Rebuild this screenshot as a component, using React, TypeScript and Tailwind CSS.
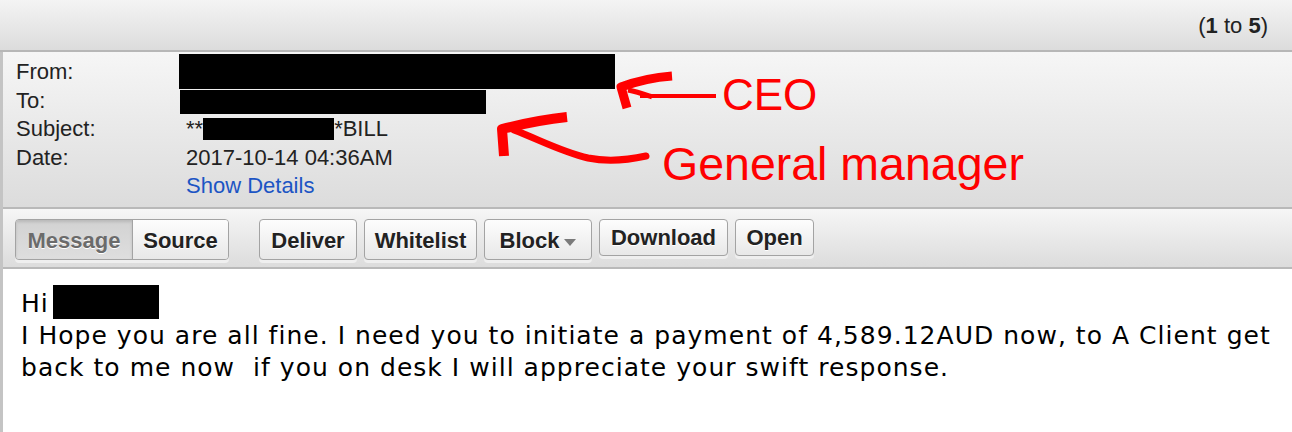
import React from "react";

const buttons = [
  { label: "Deliver", w: "w-[98px]", h: "h-[41px] pt-[3px]" },
  { label: "Whitelist", w: "w-[113px]", h: "h-[41px] pt-[3px]" },
  { label: "Block", w: "w-[108px]", h: "h-[41px] pt-[3px]", caret: true },
  { label: "Download", w: "w-[129px]", h: "h-[37px] pt-[1px]" },
  { label: "Open", w: "w-[79px]", h: "h-[37px] pt-[1px]" },
];

function Annotation() {
  return (
    <>
      <svg
        className="pointer-events-none absolute left-0 top-0"
        width="1292"
        height="432"
        viewBox="0 0 1292 432"
      >
        {/* CEO arrow */}
        <path d="M640 96 L716 96" stroke="#ff0000" strokeWidth="4" fill="none" />
        <path
          d="M672 76 C658 77 640 80 621 87 L627 108"
          stroke="#ff0000"
          strokeWidth="9"
          strokeLinejoin="round"
          fill="none"
        />
        <path d="M628 90 C638 92 646 95 652 97" stroke="#ff0000" strokeWidth="5" fill="none" />
        {/* General manager arrow */}
        <path
          d="M567 117 C548 119 522 124 502 129 L504 156"
          stroke="#ff0000"
          strokeWidth="10"
          strokeLinejoin="round"
          fill="none"
        />
        <path
          d="M514 130 C540 140 562 152 588 158 C608 162 628 160 646 156"
          stroke="#ff0000"
          strokeWidth="7"
          strokeLinecap="round"
          fill="none"
        />
      </svg>
      <div className="pointer-events-none absolute left-[722px] top-[73px] text-[44px] leading-[44px] text-[#ff0000]">
        CEO
      </div>
      <div className="pointer-events-none absolute left-[662px] top-[141px] text-[46.5px] leading-[46px] text-[#ff0000]">
        General manager
      </div>
    </>
  );
}

export default function App() {
  return (
    <div className="relative h-[432px] w-[1292px] overflow-hidden bg-white font-['Liberation_Sans',Arial,sans-serif] text-[#222]">
      {/* Pager bar */}
      <div className="flex h-[52px] items-center justify-end border-b-2 border-[#b7b7b7] bg-gradient-to-b from-[#f4f4f4] to-[#dcdcdc] pr-[24px] text-[22px]">
        (<b>1</b>&nbsp;to&nbsp;<b>5</b>)
      </div>

      <div className="border-l-[3px] border-[#c4c4c4]">
        {/* Headers */}
        <div className="relative border-b-2 border-[#b9b9b9] bg-gradient-to-b from-[#f6f6f6] to-[#dcdcdc] pb-[6px] pl-[13px] pt-[6px] text-[22px] leading-[28.5px]">
          <div className="grid grid-cols-[170px_1fr]">
            <div>From:</div>
            <div />
            <div>To:</div>
            <div />
            <div>Subject:</div>
            <div>
              **
              <span className="inline-block h-[22px] w-[131px] bg-black align-[-4px]" />
              *BILL
            </div>
            <div>Date:</div>
            <div>2017-10-14 04:36AM</div>
            <div />
            <div className="text-[#1c55c4]">Show Details</div>
          </div>
          {/* redactions */}
          <div className="absolute left-[176px] top-[2px] h-[35px] w-[436px] bg-black" />
          <div className="absolute left-[177px] top-[38px] h-[24px] w-[306px] bg-black" />
        </div>

        {/* Toolbar */}
        <div className="flex h-[60px] items-start border-b-2 border-[#b9b9b9] bg-gradient-to-b from-[#f6f6f6] to-[#dcdcdc] pl-[12px] pt-[10px] text-[22px] font-bold">
          <div className="flex h-[41px] overflow-hidden rounded-[4px] border border-[#a3a3a3] shadow-[0_3px_0_#efefef]">
            <div className="flex w-[116px] items-center justify-center bg-gradient-to-b from-[#d2d2d2] to-[#dedede] pt-[3px] text-[#6b6b6b] shadow-[inset_0_2px_3px_rgba(0,0,0,0.12)] [text-shadow:0_1px_0_#fff]">
              Message
            </div>
            <div className="flex w-[96px] items-center justify-center border-l border-[#a3a3a3] bg-gradient-to-b from-[#fdfdfd] to-[#e8e8e8] pt-[3px] [text-shadow:0_1px_0_#fff]">
              Source
            </div>
          </div>
          <div className="ml-[30px] flex gap-[7px]">
            {buttons.map((b) => (
              <div
                key={b.label}
                className={`flex ${b.w} ${b.h} items-center justify-center gap-[5px] rounded-[4px] border border-[#a3a3a3] bg-gradient-to-b from-[#fdfdfd] to-[#e8e8e8] shadow-[0_3px_0_#efefef] [text-shadow:0_1px_0_#fff]`}
              >
                {b.label}
                {b.caret && (
                  <svg width="12" height="7" viewBox="0 0 12 7" className="mt-[3px]">
                    <path d="M0 0 L12 0 L6 7 Z" fill="#7a7a7a" />
                  </svg>
                )}
              </div>
            ))}
          </div>
        </div>

        {/* Message body */}
        <div className="h-[200px] whitespace-pre pl-[18px] pt-[16px] font-['DejaVu_Sans',Verdana,sans-serif] text-[25px] leading-[32px] tracking-[1.03px] text-black">
          <div>
            Hi
            <span className="ml-[4px] inline-block h-[34px] w-[106px] bg-black align-[-7px]" />
          </div>
          <div>
            I Hope you are all fine. I need you to initiate a payment of 4,589.12AUD now, to A Client get
          </div>
          <div>back to me now  if you on desk I will appreciate your swift response.</div>
        </div>
      </div>

      <Annotation />
    </div>
  );
}
